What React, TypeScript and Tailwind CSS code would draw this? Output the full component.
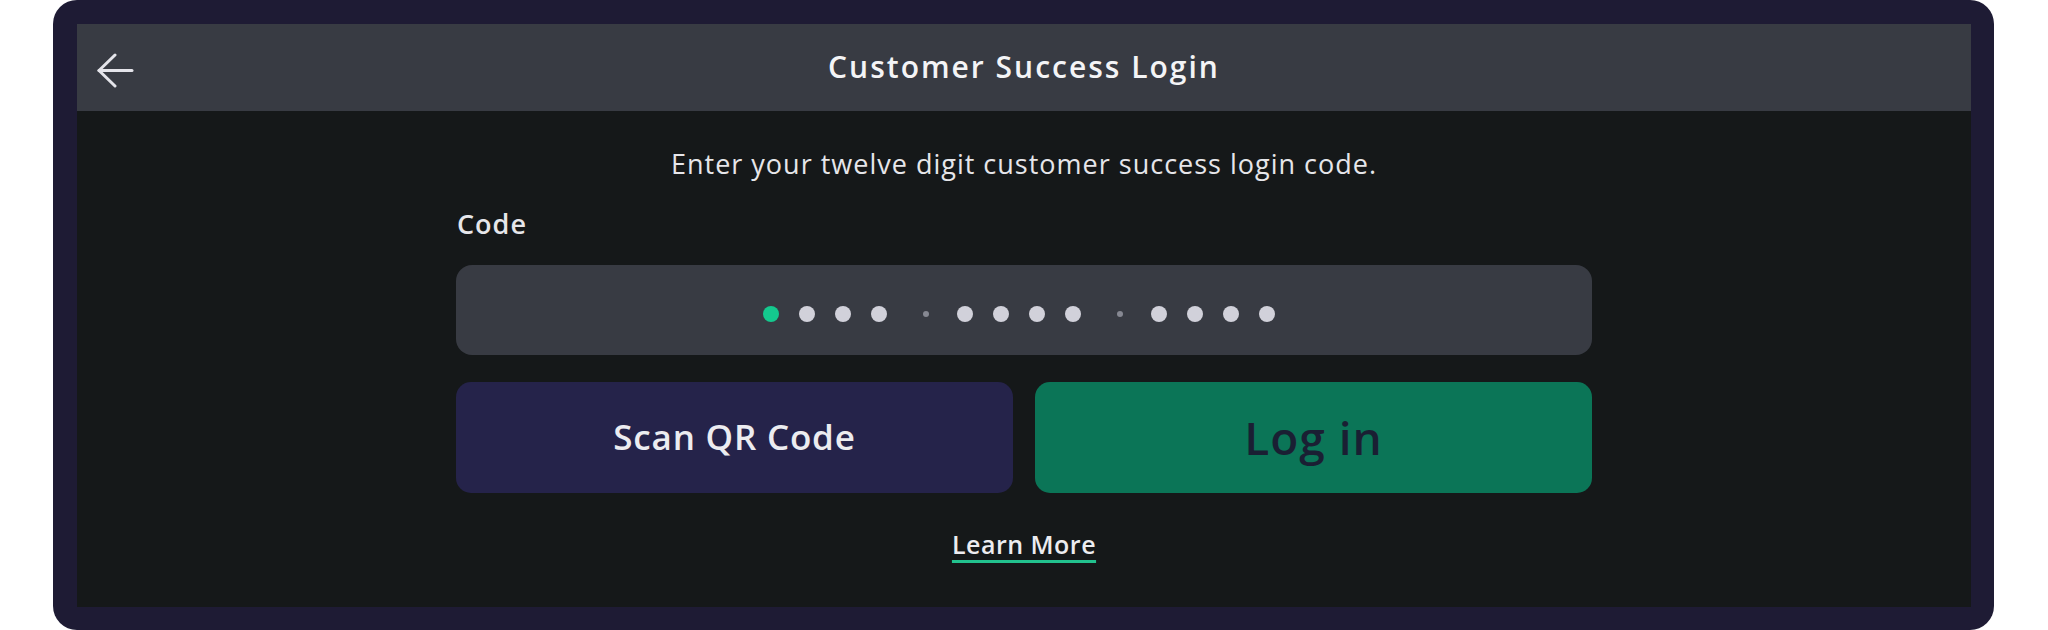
import React from "react";

const font = { fontFamily: "'Open Sans', Lato, 'Noto Sans', sans-serif" };

function Dot({ active }: { active?: boolean }) {
  return (
    <span
      className={
        active
          ? "block w-[16px] h-[16px] rounded-full bg-[#14c98e]"
          : "block w-[16px] h-[16px] rounded-full bg-[#d1d1da]"
      }
    />
  );
}

function Sep() {
  return <span className="block w-[6px] h-[6px] rounded-full bg-[#868892] ml-[16px] mr-[8px]" />;
}

export default function App() {
  return (
    <div className="w-[2048px] h-[630px] bg-white" style={font}>
      <div className="ml-[53px] w-[1941px] h-[630px] rounded-[24px] bg-[#1e1b34] pt-[24px] pl-[24px] pr-[23px] pb-[23px] flex flex-col">
        <div className="h-[87px] bg-[#383b43] flex items-center relative shrink-0">
          <button className="absolute left-[19px] top-[29px] text-[#e4e4ea]" aria-label="Back">
            <svg width="38" height="35" viewBox="0 0 38 35" fill="none" stroke="currentColor" strokeWidth="3" strokeLinecap="round" strokeLinejoin="round">
              <path d="M36 17.5H3" />
              <path d="M19 2 L3 17.5 L19 33" />
            </svg>
          </button>
          <div className="w-full text-center text-[30px] tracking-[2px] font-semibold text-[#f4f4f6] leading-none pb-[2px]">
            Customer Success Login
          </div>
        </div>
        <div className="flex-1 bg-[#151819] flex flex-col items-center pt-[37px]">
          <p className="text-[27px] tracking-[1px] leading-[32px] text-[#e6e6ea]">
            Enter your twelve digit customer success login code.
          </p>
          <div className="w-[1136px] mt-[30px]">
            <div className="text-[27px] tracking-[1px] leading-[28px] font-semibold text-[#e6e6ea] pl-[1px]">Code</div>
            <div className="mt-[27px] h-[90px] rounded-[16px] bg-[#383b43] flex items-center justify-center gap-[20px] pr-[10px] pt-[8px]">
              <Dot active />
              <Dot />
              <Dot />
              <Dot />
              <Sep />
              <Dot />
              <Dot />
              <Dot />
              <Dot />
              <Sep />
              <Dot />
              <Dot />
              <Dot />
              <Dot />
            </div>
            <div className="mt-[27px] grid grid-cols-2 gap-[22px]">
              <button className="h-[111px] rounded-[15px] bg-[#25234a] text-[#ececf0] text-[35px] tracking-[0.8px] font-semibold">
                Scan QR Code
              </button>
              <button className="h-[111px] rounded-[15px] bg-[#0b7557] text-[#1a1f33] text-[46px] tracking-[1px] font-semibold">
                Log in
              </button>
            </div>
          </div>
          <a className="mt-[36px] text-[25px] tracking-[0.5px] leading-[30px] font-semibold text-[#ececf0] underline decoration-[#22c28e] decoration-[3px] underline-offset-[6px]">
            Learn More
          </a>
        </div>
      </div>
    </div>
  );
}
